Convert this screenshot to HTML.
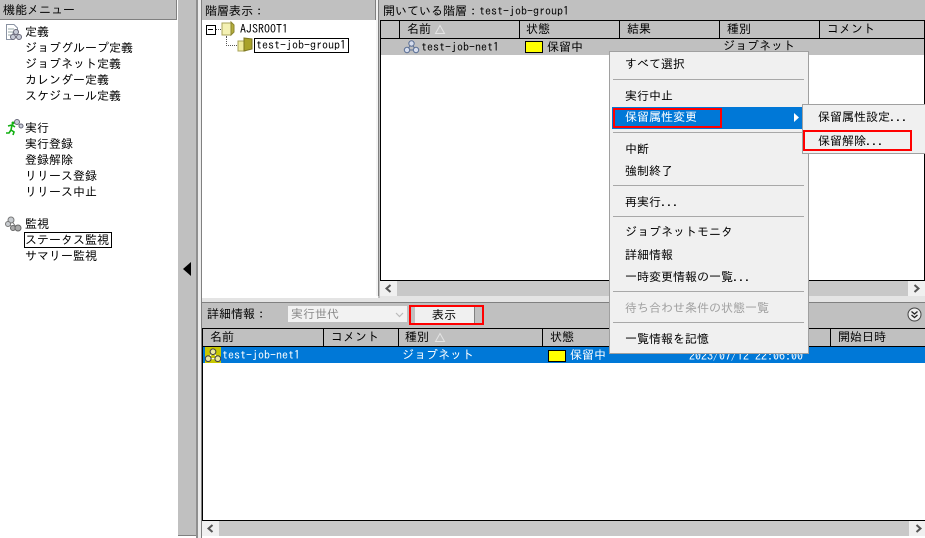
<!DOCTYPE html>
<html lang="ja"><head><meta charset="utf-8"><title>機能メニュー</title>
<style>
html,body{margin:0;padding:0}
body{width:925px;height:538px;position:relative;overflow:hidden;background:#fff;font:12px/14px "IPAGothic","Liberation Mono","Noto Sans CJK JP",monospace;color:#000}
.b{position:absolute}
.t{position:absolute;white-space:pre;line-height:14px;height:14px}
svg{position:absolute;overflow:visible}
</style></head><body>
<!-- left panel -->
<div class="b" style="left:0;top:0;width:176px;height:19px;background:#c0c0c0;border-right:1px solid #808080;border-bottom:1px solid #808080"></div>
<div class="t" style="left:3px;top:3px">機能メニュー</div>
<svg style="left:5px;top:24px" width="17" height="17" viewBox="0 0 17 17"><path d="M1.5.5H9L12.500 4V9H8V15.500H1.500Z" fill="#fff" stroke="#8a93a3"/><path d="M3 5H9M3 8H8M3 11H7" stroke="#9aa"/><circle cx="11" cy="8" r="2.500" fill="#c8ccd8" stroke="#667"/><circle cx="8" cy="13" r="2.500" fill="#c8ccd8" stroke="#667"/><circle cx="14" cy="13" r="2.500" fill="#c8ccd8" stroke="#667"/></svg>
<div class="t" style="left:25px;top:25px">定義</div>
<div class="t" style="left:25px;top:41px">ジョブグループ定義</div>
<div class="t" style="left:25px;top:57px">ジョブネット定義</div>
<div class="t" style="left:25px;top:73px">カレンダー定義</div>
<div class="t" style="left:25px;top:89px">スケジュール定義</div>
<svg style="left:5px;top:119px" width="18" height="18" viewBox="0 0 18 18"><path d="M7 6 6 11M3 7l4-1 3 2M6 11l3 2-1 3M6 11 4 14 1 14" fill="none" stroke="#12b012" stroke-width="1.600"/><circle cx="8" cy="4" r="1.500" fill="#12b012"/><circle cx="12" cy="3" r="2.500" fill="#c8ccd8" stroke="#667"/><circle cx="16" cy="7" r="2" fill="#c8ccd8" stroke="#667"/></svg>
<div class="t" style="left:25px;top:121px">実行</div>
<div class="t" style="left:25px;top:137px">実行登録</div>
<div class="t" style="left:25px;top:153px">登録解除</div>
<div class="t" style="left:25px;top:169px">リリース登録</div>
<div class="t" style="left:25px;top:185px">リリース中止</div>
<svg style="left:5px;top:216px" width="17" height="16" viewBox="0 0 17 16"><path d="M6 4 3 8 8 11M6 4 11 11" stroke="#777" fill="none"/><circle cx="6" cy="4" r="3" fill="#c8ccd0" stroke="#777"/><circle cx="3" cy="8" r="2.500" fill="#c8ccd0" stroke="#777"/><circle cx="8" cy="12" r="2.500" fill="#aaa" stroke="#666"/><circle cx="13" cy="12" r="3" fill="#aaa" stroke="#666"/></svg>
<div class="t" style="left:25px;top:217px">監視</div>
<div class="b" style="left:24px;top:232px;width:86px;height:14px;border:1px solid #000"></div>
<div class="t" style="left:25px;top:233px">ステータス監視</div>
<div class="t" style="left:25px;top:249px">サマリー監視</div>
<!-- splitter -->
<div class="b" style="left:178px;top:0;width:18px;height:535px;background:#c0c0c0;border-bottom:1px solid #808080"></div>
<div class="b" style="left:196px;top:0;width:2px;height:538px;background:#8f8f8f"></div>
<div class="b" style="left:198px;top:0;width:3px;height:538px;background:#ececec"></div>
<div class="b" style="left:201px;top:0;width:1px;height:538px;background:#808080"></div>
<svg style="left:183px;top:262px" width="9" height="14"><path d="M8 0V14L0 7Z" fill="#000"/></svg>
<!-- tree panel -->
<div class="b" style="left:202px;top:0;width:173px;height:20px;background:#c0c0c0"></div>
<div class="b" style="left:375px;top:0;width:1px;height:20px;background:#808080"></div>
<div class="t" style="left:205px;top:4px">階層表示：</div>
<div class="b" style="left:376px;top:0;width:2px;height:298px;background:#f4f4f4"></div>
<div class="b" style="left:378px;top:0;width:1px;height:298px;background:#808080"></div>
<div class="b" style="left:379px;top:0;width:1px;height:298px;background:#c0c0c0"></div>
<div class="b" style="left:206px;top:25px;width:8px;height:8px;border:1px solid #000"></div>
<div class="b" style="left:208px;top:29px;width:5px;height:1px;background:#000"></div>
<div class="b" style="left:216px;top:29px;width:5px;border-top:1px dotted #555"></div>
<div class="b" style="left:226px;top:36px;height:10px;border-left:1px dotted #555"></div>
<div class="b" style="left:226px;top:45px;width:11px;border-top:1px dotted #555"></div>
<svg style="left:221px;top:21px" width="14" height="15" viewBox="0 0 14 15"><path d="M1 2H10V14H1Z" fill="#f4f1b4" stroke="#a8a35a"/><path d="M10 1 13 4V11L10 14Z" fill="#b5ae3c" stroke="#8c8630"/></svg>
<svg style="left:237px;top:37px" width="16" height="15" viewBox="0 0 16 15"><path d="M1 4H8V14H1Z" fill="#f0eb9d" stroke="#a8a35a"/><path d="M7 1 15 2V12L7 14Z" fill="#a9a22a" stroke="#7c7620"/></svg>
<div class="t" style="left:240px;top:22px">AJSROOT1</div>
<div class="b" style="left:254px;top:38px;width:93px;height:13px;border:1px solid #000"></div>
<div class="t" style="left:256px;top:38px">test-job-group1</div>
<!-- open panel -->
<div class="b" style="left:380px;top:0;width:545px;height:20px;background:#c0c0c0"></div>
<div class="t" style="left:383px;top:4px">開いている階層：test-job-group1</div>
<div class="b" style="left:380px;top:20px;width:545px;height:19px;background:#c0c0c0;border-top:1px solid #000;border-bottom:1px solid #000;box-sizing:border-box"></div>
<div class="b" style="left:380px;top:20px;width:1px;height:261px;background:#000"></div>
<div class="b" style="left:924px;top:20px;width:1px;height:261px;background:#000"></div>
<div class="b" style="left:399px;top:20px;width:1px;height:19px;background:#000"></div>
<div class="b" style="left:519px;top:20px;width:1px;height:19px;background:#000"></div>
<div class="b" style="left:619px;top:20px;width:1px;height:19px;background:#000"></div>
<div class="b" style="left:719px;top:20px;width:1px;height:19px;background:#000"></div>
<div class="b" style="left:819px;top:20px;width:1px;height:19px;background:#000"></div>
<div class="t" style="left:407px;top:22px">名前</div>
<svg style="left:435px;top:25px" width="10" height="9"><path d="M5 .5 9.500 8.500H.5Z" fill="none" stroke="#e4e4e4"/></svg>
<div class="t" style="left:526px;top:22px">状態</div>
<div class="t" style="left:627px;top:22px">結果</div>
<div class="t" style="left:727px;top:22px">種別</div>
<div class="t" style="left:827px;top:22px">コメント</div>
<div class="b" style="left:381px;top:39px;width:543px;height:16px;background:#c0c0c0"></div>
<svg style="left:404px;top:40px" width="15" height="14" viewBox="0 0 15 14"><path d="M7.500 4 3 10H12Z" fill="none" stroke="#5a6f95"/><circle cx="7.500" cy="3.500" r="2.700" fill="#d7deee" stroke="#5a6f95"/><circle cx="3" cy="10" r="2.700" fill="#d7deee" stroke="#5a6f95"/><circle cx="12" cy="10" r="2.700" fill="#d7deee" stroke="#5a6f95"/></svg>
<div class="t" style="left:421px;top:40px">test-job-net1</div>
<div class="b" style="left:525px;top:41px;width:16px;height:10px;background:#ff0;border:1px solid #000"></div>
<div class="t" style="left:547px;top:40px">保留中</div>
<div class="t" style="left:723px;top:39px">ジョブネット</div>
<div class="b" style="left:380px;top:280px;width:545px;height:1px;background:#000"></div>
<div class="b" style="left:380px;top:281px;width:545px;height:15px;background:#c8c8c8"></div>
<div class="b" style="left:380px;top:281px;width:17px;height:15px;background:#f0f0f0"></div>
<div class="b" style="left:908px;top:281px;width:17px;height:15px;background:#f0f0f0"></div>
<svg style="left:385px;top:284px" width="7" height="9"><path d="M5.500 1 1.500 4.500 5.500 8" fill="none" stroke="#555" stroke-width="2"/></svg>
<svg style="left:913px;top:284px" width="7" height="9"><path d="M1.500 1 5.500 4.500 1.500 8" fill="none" stroke="#555" stroke-width="2"/></svg>
<!-- detail panel -->
<div class="b" style="left:202px;top:296px;width:723px;height:32px;background:#c0c0c0"></div>
<div class="b" style="left:202px;top:298px;width:723px;height:4px;background:#e4e4e4"></div>
<div class="b" style="left:380px;top:296px;width:545px;height:2px;background:#e4e4e4"></div>
<div class="b" style="left:202px;top:296px;width:176px;height:2px;background:#fff"></div>
<div class="b" style="left:202px;top:302px;width:723px;height:1px;background:#808080"></div>
<div class="t" style="left:207px;top:307px">詳細情報：</div>
<div class="b" style="left:288px;top:306px;width:119px;height:16px;background:#f2f2f2"></div>
<div class="t" style="left:291px;top:307px;color:#8a8a8a">実行世代</div>
<svg style="left:395px;top:312px" width="9" height="6"><path d="M1 1 4.500 4.500 8 1" fill="none" stroke="#bbb" stroke-width="1.200"/></svg>
<div class="b" style="left:415px;top:306px;width:59px;height:17px;background:#f0f0f0"></div>
<div class="b" style="left:474px;top:306px;width:1px;height:17px;background:#808080"></div>
<div class="t" style="left:432px;top:308px">表示</div>
<div class="b" style="left:409px;top:305px;width:71px;height:16px;border:2px solid #f00"></div>
<svg style="left:907px;top:307px" width="15" height="15" viewBox="0 0 15 15"><circle cx="7.500" cy="7.500" r="6.500" fill="#eee" stroke="#444"/><path d="M4.500 4.500 7.500 7 10.500 4.500M4.500 8 7.500 10.500 10.500 8" fill="none" stroke="#222" stroke-width="1.300"/></svg>
<div class="b" style="left:202px;top:328px;width:723px;height:19px;background:#c0c0c0;border-top:1px solid #000;border-bottom:1px solid #000;box-sizing:border-box"></div>
<div class="b" style="left:202px;top:328px;width:1px;height:193px;background:#000"></div>
<div class="b" style="left:323px;top:328px;width:1px;height:19px;background:#000"></div>
<div class="b" style="left:398px;top:328px;width:1px;height:19px;background:#000"></div>
<div class="b" style="left:542px;top:328px;width:1px;height:19px;background:#000"></div>
<div class="b" style="left:830px;top:328px;width:1px;height:19px;background:#000"></div>
<div class="t" style="left:210px;top:330px">名前</div>
<div class="t" style="left:331px;top:330px">コメント</div>
<div class="t" style="left:405px;top:330px">種別</div>
<svg style="left:435px;top:333px" width="10" height="9"><path d="M5 .5 9.500 8.500H.5Z" fill="none" stroke="#e4e4e4"/></svg>
<div class="t" style="left:550px;top:330px">状態</div>
<div class="t" style="left:838px;top:330px">開始日時</div>
<div class="b" style="left:203px;top:347px;width:722px;height:16px;background:#0078d7"></div>
<div class="b" style="left:205px;top:347px;width:16px;height:16px;background:#c8c800"></div>
<svg style="left:205px;top:348px" width="16" height="15" viewBox="0 0 15 14"><path d="M7.500 4 3 10H12Z" fill="none" stroke="#fff"/><circle cx="7.500" cy="3.500" r="2.700" fill="#ece9a0" stroke="#444"/><circle cx="3" cy="10" r="2.700" fill="#ece9a0" stroke="#444"/><circle cx="12" cy="10" r="2.700" fill="#ece9a0" stroke="#444"/></svg>
<div class="t" style="left:222px;top:348px;color:#fff">test-job-net1</div>
<div class="t" style="left:402px;top:348px;color:#fff">ジョブネット</div>
<div class="b" style="left:548px;top:350px;width:16px;height:10px;background:#ff0;border:1px solid #000"></div>
<div class="t" style="left:570px;top:348px;color:#fff">保留中</div>
<div class="t" style="left:689px;top:349px;color:#fff">2023/07/12 22:06:00</div>
<div class="b" style="left:202px;top:520px;width:723px;height:1px;background:#000"></div>
<div class="b" style="left:202px;top:521px;width:723px;height:15px;background:#c8c8c8"></div>
<div class="b" style="left:202px;top:521px;width:17px;height:15px;background:#f0f0f0"></div>
<div class="b" style="left:909px;top:521px;width:16px;height:15px;background:#f0f0f0"></div>
<div class="b" style="left:202px;top:536px;width:723px;height:2px;background:#fff"></div>
<svg style="left:207px;top:524px" width="7" height="9"><path d="M5.500 1 1.500 4.500 5.500 8" fill="none" stroke="#555" stroke-width="2"/></svg>
<svg style="left:915px;top:524px" width="7" height="9"><path d="M1.500 1 5.500 4.500 1.500 8" fill="none" stroke="#555" stroke-width="2"/></svg>
<!-- context menu -->
<div class="b" style="left:609px;top:51px;width:198px;height:301px;background:#f0f0f0;border:1px solid #a0a0a0"></div>
<div class="b" style="left:613px;top:79px;width:191px;height:1px;background:#a8a8a8"></div>
<div class="b" style="left:613px;top:132px;width:191px;height:1px;background:#a8a8a8"></div>
<div class="b" style="left:613px;top:185px;width:191px;height:1px;background:#a8a8a8"></div>
<div class="b" style="left:613px;top:216px;width:191px;height:1px;background:#a8a8a8"></div>
<div class="b" style="left:613px;top:291px;width:191px;height:1px;background:#a8a8a8"></div>
<div class="b" style="left:613px;top:322px;width:191px;height:1px;background:#a8a8a8"></div>
<div class="t" style="left:625px;top:57px">すべて選択</div>
<div class="t" style="left:625px;top:89px">実行中止</div>
<div class="b" style="left:612px;top:107px;width:192px;height:22px;background:#0078d7"></div>
<div class="t" style="left:625px;top:110px;color:#fff">保留属性変更</div>
<div class="b" style="left:613px;top:108px;width:105px;height:16px;border:2px solid #f00"></div>
<svg style="left:794px;top:113px" width="5" height="9"><path d="M0 0 5 4.500 0 9Z" fill="#fff"/></svg>
<div class="t" style="left:625px;top:142px">中断</div>
<div class="t" style="left:625px;top:164px">強制終了</div>
<div class="t" style="left:625px;top:195px">再実行...</div>
<div class="t" style="left:625px;top:225px">ジョブネットモニタ</div>
<div class="t" style="left:625px;top:248px">詳細情報</div>
<div class="t" style="left:625px;top:270px">一時変更情報の一覧...</div>
<div class="t" style="left:625px;top:301px;color:#a0a0a0">待ち合わせ条件の状態一覧</div>
<div class="t" style="left:625px;top:332px">一覧情報を記憶</div>
<!-- submenu -->
<div class="b" style="left:802px;top:104px;width:123px;height:48px;background:#f0f0f0;border:1px solid #a0a0a0;border-right:0"></div>
<div class="t" style="left:818px;top:110px">保留属性設定...</div>
<div class="t" style="left:818px;top:134px">保留解除...</div>
<div class="b" style="left:803px;top:130px;width:105px;height:17px;border:2px solid #f00"></div>
</body></html>
